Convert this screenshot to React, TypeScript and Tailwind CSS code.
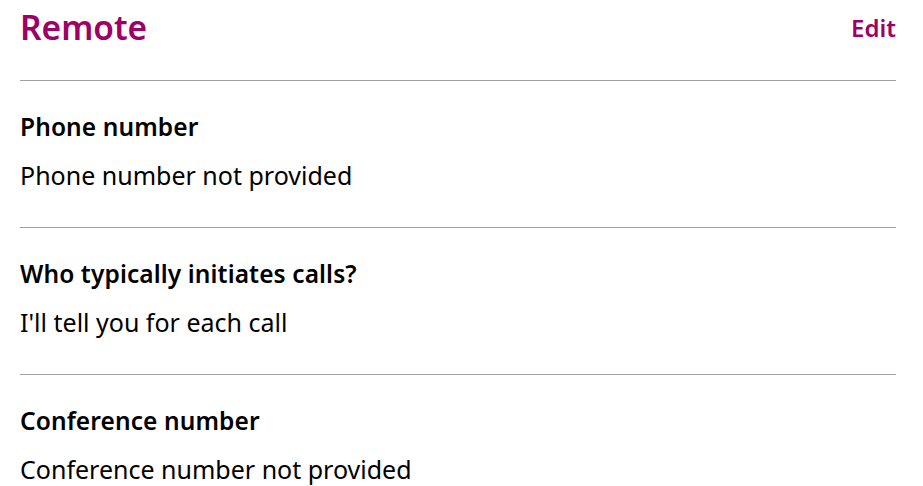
import React from 'react';

interface Field {
    label: string;
    value: string;
}

const fields: Field[] = [
    { label: 'Phone number', value: 'Phone number not provided' },
    { label: 'Who typically initiates calls?', value: "I'll tell you for each call" },
    { label: 'Conference number', value: 'Conference number not provided' },
];

const App: React.FC = () => {
    return (
        <div className="bg-white h-screen overflow-hidden pl-5 pr-[27px] font-['Noto_Sans',sans-serif] text-black">
            <div className="flex justify-between items-start h-[81px] pt-[5px] border-b border-[#a0a0a0]">
                <h1 className="text-[33.5px] leading-[44px] font-semibold text-[#9e0066]">Remote</h1>
                <button className="text-[24px] leading-[44px] font-semibold text-[#9e0066] mt-[1px]">Edit</button>
            </div>

            {fields.map((f, i) => (
                <div
                    key={f.label}
                    className={i < fields.length - 1 ? 'pt-[30px] h-[147px] border-b border-[#a0a0a0]' : 'pt-[30px]'}
                >
                    <div className="text-[24.5px] leading-[32px] font-semibold tracking-[0.1px]">{f.label}</div>
                    <div className="text-[25px] leading-[32px] mt-[16px]">{f.value}</div>
                </div>
            ))}
        </div>
    );
};

export default App;
